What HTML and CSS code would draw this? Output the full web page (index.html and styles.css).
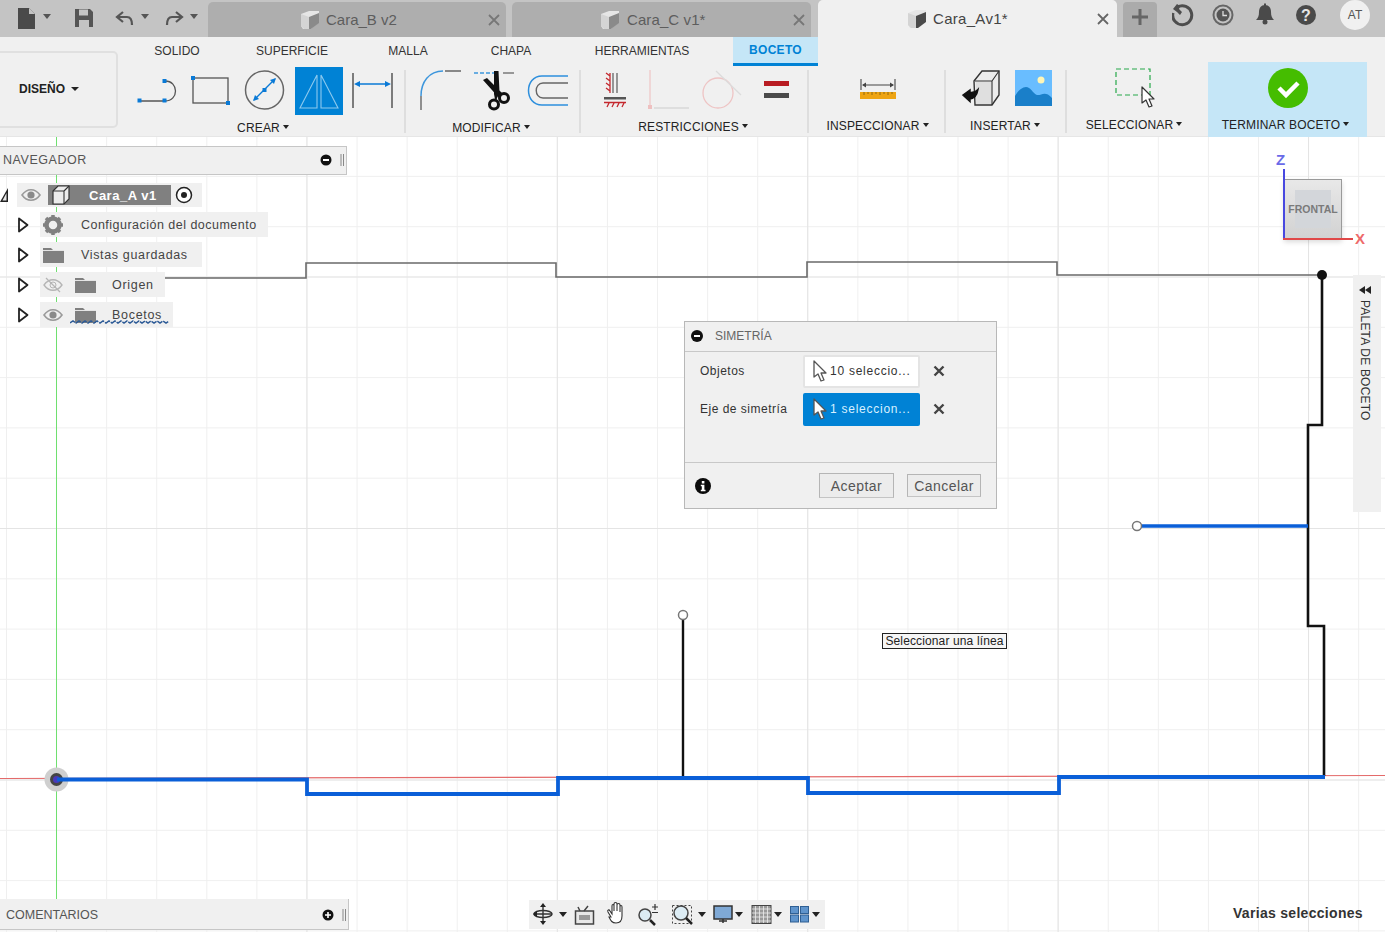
FILE: index.html
```html
<!DOCTYPE html>
<html lang="es">
<head>
<meta charset="utf-8">
<title>Cara_A v1</title>
<link rel="stylesheet" href="styles.css">
</head>
<body>
<svg class="defs" width="0" height="0">
  <defs>
    <symbol id="cube" viewBox="0 0 20 20"><path d="M1 4 9 1h10v11l-8 7H3l-2-3z" fill="#e6e6e6"/><path d="M9 7l10-4v10l-8 6H9z" fill="currentColor"/><path d="M1 4l8 3v12H4l-3-3z" fill="#d4d4d4"/></symbol>
    <symbol id="eye" viewBox="0 0 20 14"><path d="M1 7c5-7 13-7 18 0-5 7-13 7-18 0z" fill="none" stroke="#9a9a9a" stroke-width="1.600"/><circle cx="10" cy="7" r="3.600" fill="#8a8a8a"/></symbol>
    <symbol id="folder" viewBox="0 0 21 16"><path d="M0 1h8l2 2h11v13H0z" fill="#808080"/><path d="M0 3.500h21" stroke="#e5e5e5" stroke-width="1"/></symbol>
    <symbol id="expander" viewBox="0 0 12 16"><path d="M2 1.500 10.500 8 2 14.500z" fill="#fff" stroke="#222" stroke-width="1.800" stroke-linejoin="round"/></symbol>
    <symbol id="arrow" viewBox="0 0 16 22"><path d="M2 1v16l4-3 3 7 3-1-3-7h5z" fill="#fff" stroke="#555" stroke-width="1.300" stroke-linejoin="round"/></symbol>
    <symbol id="cross" viewBox="0 0 12 12"><path d="M1.500 1.500l9 9m0-9-9 9" stroke="#444" stroke-width="2.400"/></symbol>
  </defs>
</svg>

<div class="app">
  <header class="topbar">
    <svg class="qat" width="204" height="37" viewBox="0 0 204 37">
      <path d="M18 8h11l6 6v15H18z" fill="#4a4a4a"/><path d="M29 8v6h6" fill="#c4c4c4"/>
      <path d="M43 14h8l-4 5z" fill="#555"/>
      <path d="M75 9h15l3 3v15H75z" fill="#555"/><rect x="79" y="9.500" width="9" height="6" fill="#c4c4c4"/><rect x="79" y="20" width="10" height="7" fill="#c4c4c4"/>
      <path d="M123 12l-6 5 6 5M118 17h9c4 0 5 3 5 8" fill="none" stroke="#555" stroke-width="2.200"/>
      <path d="M141 14h8l-4 5z" fill="#555"/>
      <path d="M176 12l6 5-6 5M181 17h-9c-4 0-5 3-5 8" fill="none" stroke="#555" stroke-width="2.200"/>
      <path d="M190 14h8l-4 5z" fill="#555"/>
    </svg>
    <div class="tab tab-off">
      <svg class="tab-cube"><use href="#cube"/></svg>
      <span class="tab-name">Cara_B v2</span>
      <svg class="tab-x" viewBox="0 0 12 12"><path d="M1 1l10 10m0-10L1 11" stroke="#777" stroke-width="1.800"/></svg>
    </div>
    <div class="tab tab-off">
      <svg class="tab-cube"><use href="#cube"/></svg>
      <span class="tab-name">Cara_C v1*</span>
      <svg class="tab-x" viewBox="0 0 12 12"><path d="M1 1l10 10m0-10L1 11" stroke="#777" stroke-width="1.800"/></svg>
    </div>
    <div class="tab tab-on">
      <svg class="tab-cube"><use href="#cube"/></svg>
      <span class="tab-name">Cara_Av1*</span>
      <svg class="tab-x" viewBox="0 0 12 12"><path d="M1 1l10 10m0-10L1 11" stroke="#666" stroke-width="1.800"/></svg>
    </div>
    <div class="tab-add">
      <svg width="16" height="16" viewBox="0 0 16 16"><path d="M8 0v16M0 8h16" stroke="#666" stroke-width="3"/></svg>
    </div>
    <svg class="tray" width="150" height="30" viewBox="1172 0 150 30">
      <path d="M1177.500 7A9.500 9.500 0 1 1 1173 13" fill="none" stroke="#4d4d4d" stroke-width="3"/>
      <path d="M1173 9l4-5 3 2-1 3 3 3-2 3-3-3z" fill="#4d4d4d"/>
      <circle cx="1223" cy="15" r="9.500" fill="none" stroke="#666" stroke-width="2"/>
      <circle cx="1223" cy="15" r="6.500" fill="#555"/><path d="M1223 11v4.500h4" fill="none" stroke="#ddd" stroke-width="1.300"/>
      <path d="M1265 5c-4 0-6 3-6 7 0 4-1 6-3 8h18c-2-2-3-4-3-8 0-4-2-7-6-7z" fill="#4a4a4a"/><circle cx="1265" cy="22" r="2.500" fill="#4a4a4a"/><rect x="1264" y="3.500" width="2" height="3" fill="#4a4a4a"/>
      <circle cx="1306" cy="15" r="10" fill="#4a4a4a"/>
      <text x="1306" y="20.500" class="help-mark">?</text>
    </svg>
    <div class="avatar">AT</div>
  </header>

  <section class="ribbon">
    <div class="design-box"><span class="design">DISEÑO</span><i class="caret"></i></div>
    <div class="ribbon-main">
      <nav class="rib-tabs">
        <span class="rib-tab">SOLIDO</span>
        <span class="rib-tab">SUPERFICIE</span>
        <span class="rib-tab">MALLA</span>
        <span class="rib-tab">CHAPA</span>
        <span class="rib-tab">HERRAMIENTAS</span>
        <span class="rib-tab rib-tab-on">BOCETO</span>
      </nav>
      <div class="tools">
        <div class="group g-crear">
          <svg class="gicons" width="285" height="53" viewBox="120 62 285 53">
            <path d="M139 101h26c14 0 14-20 0-20" fill="none" stroke="#555" stroke-width="1.300"/>
            <g fill="#0a7ad6"><rect x="137.500" y="98.500" width="4" height="4"/><rect x="162.500" y="98.500" width="4" height="4"/><rect x="162.500" y="79" width="4" height="4"/></g>
            <rect x="193" y="78" width="35" height="25" fill="none" stroke="#555" stroke-width="1.300"/>
            <g fill="#0a7ad6"><rect x="191" y="76" width="4" height="4"/><rect x="226" y="101" width="4" height="4"/></g>
            <circle cx="264.500" cy="90" r="19" fill="none" stroke="#666" stroke-width="1.500"/>
            <path d="M254 100l21-21" stroke="#0a7ad6" stroke-width="1.300"/>
            <path d="M253 101l2-6 4 4zM276 78l-2 6-4-4z" fill="#0a7ad6"/><rect x="262.500" y="88" width="4" height="4" fill="#0a7ad6"/>
            <rect x="295" y="67" width="48" height="48" fill="#0082d5"/>
            <path d="M317 75v33h-17zM321 75v33h17z" fill="none" stroke="#8cc9ee" stroke-width="1.100"/>
            <path d="M353 73v35M392 73v35" stroke="#555" stroke-width="1.500"/>
            <path d="M356 84h33" stroke="#0a7ad6" stroke-width="1.300"/>
            <path d="M354 84l6-3v6zM391 84l-6-3v6z" fill="#0a7ad6"/>
          </svg>
          <div class="glabel">CREAR<i class="caret caret-s"></i></div>
        </div>
        <div class="group g-mod">
          <svg class="gicons" width="174" height="53" viewBox="406 62 174 53">
            <path d="M421 96c0-14 8-25 22-25" fill="none" stroke="#3d96dc" stroke-width="1.500"/>
            <path d="M421 96v14M445 71h16" stroke="#666" stroke-width="1.400"/>
            <path d="M474 73h21" stroke="#3d96dc" stroke-width="1.300" stroke-dasharray="4 2"/><path d="M503 73h11" stroke="#666" stroke-width="1.300"/>
            <path d="M483 80l4-2 15 15-2 6zM494 71h4.500l1 21-4 10-1.500-8z" fill="#111"/>
            <circle cx="504" cy="98" r="4.500" fill="#f0f0f0" stroke="#111" stroke-width="3"/>
            <circle cx="494" cy="104.500" r="4.500" fill="#f0f0f0" stroke="#111" stroke-width="3"/>
            <path d="M568 76h-26c-18 0-18 29 0 29h26" fill="none" stroke="#2d8fdd" stroke-width="1.500"/>
            <path d="M568 83h-25c-9 0-9 15 0 15h25" fill="none" stroke="#666" stroke-width="1.400"/>
          </svg>
          <div class="glabel lb-mod">MODIFICAR<i class="caret caret-s"></i></div>
        </div>
        <div class="group g-res">
          <svg class="gicons" width="227" height="53" viewBox="581 62 227 53">
            <path d="M617 73v20M613 73v20" stroke="#666" stroke-width="1.300"/>
            <path d="M610 73v20M610 76l-4-3M610 81l-4-3M610 86l-4-3M610 91l-4-3" stroke="#c4282e" stroke-width="1.300" fill="none"/>
            <rect x="604" y="97" width="22" height="2.500" fill="#555"/>
            <path d="M604 102.500h22M607 107l2-4M612 107l2-4M617 107l2-4M622 107l2-4" stroke="#c4282e" stroke-width="1.300"/>
            <path d="M650 70v36" stroke="#eec8c8" stroke-width="1.300"/><rect x="648" y="105" width="4" height="4" fill="#eec0c0"/><path d="M654 108h35" stroke="#d8d8d8" stroke-width="1.300"/>
            <circle cx="718" cy="93" r="15" fill="none" stroke="#eec4c4" stroke-width="1.300"/><path d="M716 71l25 24" stroke="#dcdcdc" stroke-width="1.300"/>
            <rect x="764" y="81" width="25" height="5" fill="#b81c22"/><rect x="764" y="93" width="25" height="5" fill="#4a4a4a"/>
          </svg>
          <div class="glabel glabel-up lb-res">RESTRICCIONES<i class="caret caret-s"></i></div>
        </div>
        <div class="group g-ins">
          <svg class="gicons" width="136" height="53" viewBox="809 62 136 53">
            <path d="M861 79v11M895 79v11" stroke="#555" stroke-width="1.200"/>
            <path d="M863 85h30" stroke="#444" stroke-width="1"/><path d="M862 85l4-2.500v5zM894 85l-4-2.500v5z" fill="#444"/>
            <rect x="860" y="92" width="36" height="7" fill="#eea413"/>
            <path d="M864 92v3M868 92v2M872 92v3M876 92v2M880 92v3M884 92v2M888 92v3M892 92v2" stroke="#7a5a10" stroke-width=".8"/>
          </svg>
          <div class="glabel glabel-up2">INSPECCIONAR<i class="caret caret-s"></i></div>
        </div>
        <div class="group g-ins2">
          <svg class="gicons" width="120" height="53" viewBox="946 62 120 53">
            <path d="M974 81l8-10h17v24l-7 10h-17z" fill="#ececec" stroke="#333" stroke-width="1.400"/>
            <path d="M975 81h17v24M992 81l7-10" fill="none" stroke="#333" stroke-width="1.100"/><rect x="976" y="82" width="15" height="22" fill="#dfdfdf"/>
            <path d="M963 95l7-5v2.500c3 0 5 .5 8-3-1 6-4 9-8 9.500v2.500z" fill="#111" stroke="#111" stroke-width="1.500"/>
            <rect x="1015" y="70" width="37" height="36" fill="#69bdff"/>
            <path d="M1015 106V96c4-7 10-11 14-8 3 2 5 6 8 7 4 1 8-5 15 3v8z" fill="#1a7fc9"/>
            <circle cx="1041" cy="80" r="3.500" fill="#fff6b8"/>
          </svg>
          <div class="glabel glabel-up2 lb-ins2">INSERTAR<i class="caret caret-s"></i></div>
        </div>
        <div class="group g-sel">
          <svg class="gicons" width="133" height="53" viewBox="1067 62 133 53">
            <rect x="1116" y="69" width="34" height="26" fill="none" stroke="#27a84a" stroke-width="1.200" stroke-dasharray="5 3"/>
            <path d="M1142 87v16l4-3 3 7 3-1-3-7h5z" fill="#fff" stroke="#333" stroke-width="1.200" stroke-linejoin="round"/>
          </svg>
          <div class="glabel glabel-up3 lb-sel">SELECCIONAR<i class="caret caret-s"></i></div>
        </div>
        <div class="group g-end">
          <svg class="gicons" width="159" height="46" viewBox="1208 62 159 46">
            <circle cx="1288" cy="88" r="20" fill="#45bd00"/>
            <path d="M1279 88l7 7 12-12" fill="none" stroke="#fff" stroke-width="4.500"/>
          </svg>
          <div class="glabel glabel-end">TERMINAR BOCETO<i class="caret caret-s"></i></div>
        </div>
      </div>
    </div>
  </section>

  <main class="canvas">
    <svg class="sketch" viewBox="0 137 1385 795" width="1385" height="795">
      <defs>
        <pattern id="minor" x="6" y="25" width="50.08" height="50.3" patternUnits="userSpaceOnUse"><path d="M0 0V50.300M0 0H50.080" stroke="#efefef" stroke-width="2" fill="none"/></pattern>
        <pattern id="major" x="56" y="25" width="250.400" height="251.500" patternUnits="userSpaceOnUse"><path d="M0 0V251.500M0 0H250.400" stroke="#e4e4e4" stroke-width="2" fill="none"/></pattern>
      </defs>
      <rect x="0" y="137" width="1385" height="795" fill="#fff"/>
      <rect x="0" y="137" width="1385" height="795" fill="url(#minor)"/>
      <rect x="0" y="137" width="1385" height="795" fill="url(#major)"/>
      <path d="M0 778.500 1385 775.500" stroke="#e46a6a" stroke-width="1.200"/>
      <path d="M56.500 137V900" stroke="#6fe06f" stroke-width="1"/>
      <path d="M163 278H306V263H556V277H807V262H1057V275H1322" fill="none" stroke="#6a6a6a" stroke-width="1.600"/>
      <path d="M1322 275V425H1308V626H1324V776" fill="none" stroke="#111" stroke-width="2.600"/>
      <path d="M683 618V777" stroke="#111" stroke-width="2.400"/>
      <path d="M1140 526H1308" stroke="#0a5fd8" stroke-width="3.500"/>
      <circle cx="1322" cy="275" r="5" fill="#111"/>
      <circle cx="683" cy="615" r="4.500" fill="#fff" stroke="#777" stroke-width="1.500"/>
      <circle cx="1137" cy="526" r="4.500" fill="#fff" stroke="#777" stroke-width="1.500"/>
      <circle cx="56.500" cy="779.500" r="12" fill="#cfcfcf"/>
      <circle cx="56.500" cy="779.500" r="6.500" fill="#444"/>
      <circle cx="56.500" cy="779.500" r="3.500" fill="#4a38b8"/>
      <path d="M57 779.500H307V794H558V778H808V793H1059V777H1325" fill="none" stroke="#0a5fd8" stroke-width="3.800"/>
    </svg>

    <section class="panel nav-panel">
      <span class="panel-title">NAVEGADOR</span>
      <svg class="panel-ctl" width="24" height="20" viewBox="0 0 24 20"><circle cx="6" cy="10" r="5.500" fill="#111"/><rect x="3" y="9" width="6" height="2" fill="#fff"/><path d="M21 4v12M23.500 4v12" stroke="#888" stroke-width="1"/></svg>
    </section>

    <div class="tree">
      <div class="root-row">
        <svg class="root-tri" width="9" height="16" viewBox="0 0 9 16"><path d="M8 1v14H0z" fill="#222"/><path d="M6.500 6v7.500H2.500z" fill="#e8e8e8"/></svg>
        <div class="row-bg root-bg">
          <svg class="eye"><use href="#eye"/></svg>
          <div class="root-name">
            <svg width="20" height="20" viewBox="0 0 20 20"><path d="M2 6l5-5h11v13l-5 5H2z" fill="#ececec" stroke="#333" stroke-width="1.200"/><path d="M2 6h11v13M13 6l5-5" fill="none" stroke="#333" stroke-width="1.100"/></svg>
            <span>Cara_A v1</span>
          </div>
          <svg class="radio" width="18" height="18" viewBox="0 0 18 18"><circle cx="9" cy="9" r="7.500" fill="#fff" stroke="#222" stroke-width="1.500"/><circle cx="9" cy="9" r="3" fill="#222"/></svg>
        </div>
      </div>
      <div class="tree-row">
        <svg class="exp"><use href="#expander"/></svg>
        <div class="row-bg">
          <svg class="ico-a" width="22" height="22" viewBox="0 0 22 22"><circle cx="11" cy="11" r="6.500" fill="none" stroke="#808080" stroke-width="4.500"/><path d="M11 1v4M11 17v4M1 11h4M17 11h4M4 4l3 3M15 15l3 3M18 4l-3 3M7 15l-3 3" stroke="#808080" stroke-width="3.500"/></svg>
          <span class="row-text r1">Configuración del documento</span>
        </div>
      </div>
      <div class="tree-row">
        <svg class="exp"><use href="#expander"/></svg>
        <div class="row-bg">
          <svg class="ico-f"><use href="#folder"/></svg>
          <span class="row-text r2">Vistas guardadas</span>
        </div>
      </div>
      <div class="tree-row">
        <svg class="exp"><use href="#expander"/></svg>
        <div class="row-bg">
          <svg class="ico-e" viewBox="0 0 20 16"><path d="M1 8c5-7 13-7 18 0-5 7-13 7-18 0z" fill="none" stroke="#b5b5b5" stroke-width="1.300"/><circle cx="10" cy="8" r="3" fill="none" stroke="#b5b5b5"/><path d="M3 1l14 14" stroke="#b5b5b5" stroke-width="1.300"/></svg>
          <svg class="ico-f2"><use href="#folder"/></svg>
          <span class="row-text r3">Origen</span>
        </div>
      </div>
      <div class="tree-row">
        <svg class="exp"><use href="#expander"/></svg>
        <div class="row-bg row-last">
          <svg class="ico-e" viewBox="0 0 20 16"><use href="#eye" width="20" height="14" y="1"/></svg>
          <svg class="ico-f2"><use href="#folder"/></svg>
          <span class="row-text r3">Bocetos</span>
          <svg class="wavy" width="104" height="6" viewBox="0 0 104 6"><path d="M0 4l3-2 3 2 3-2 3 2 3-2 3 2 3-2 3 2 3-2 3 2 3-2 3 2 3-2 3 2 3-2 3 2 3-2 3 2 3-2 3 2 3-2 3 2 3-2 3 2 3-2 3 2 3-2 3 2 3-2 3 2 3-2 3 2 3-2" fill="none" stroke="#2c5a96" stroke-width="1.500" stroke-dasharray="6 1"/></svg>
        </div>
      </div>
    </div>

    <div class="viewcube">
      <span class="axis-z">Z</span>
      <div class="cube-face"><i class="cube-inner"></i><span>FRONTAL</span></div>
      <span class="axis-x">X</span>
    </div>

    <aside class="palette">
      <svg width="12" height="8" viewBox="0 0 12 8"><path d="M6 0v8L0 4zM12 0v8L6 4z" fill="#222"/></svg>
      <span class="palette-text">PALETA DE BOCETO</span>
    </aside>

    <section class="dialog">
      <header class="dlg-head">
        <svg width="12" height="12" viewBox="0 0 12 12"><circle cx="6" cy="6" r="6" fill="#111"/><rect x="3" y="5" width="6" height="2" fill="#fff"/></svg>
        <span>SIMETRÍA</span>
      </header>
      <div class="dlg-body">
        <div class="dlg-row">
          <span class="dlg-label">Objetos</span>
          <div class="field"><svg class="fld-arrow"><use href="#arrow"/></svg><span>10 seleccio...</span></div>
          <svg class="fld-x"><use href="#cross"/></svg>
        </div>
        <div class="dlg-row">
          <span class="dlg-label">Eje de simetría</span>
          <div class="field field-on"><svg class="fld-arrow"><use href="#arrow"/></svg><span>1 seleccion...</span></div>
          <svg class="fld-x"><use href="#cross"/></svg>
        </div>
      </div>
      <footer class="dlg-foot">
        <svg class="info" width="16" height="16" viewBox="0 0 16 16"><circle cx="8" cy="8" r="8" fill="#0b0b0b"/><rect x="6.800" y="3" width="2.600" height="2.500" fill="#fff"/><path d="M5.800 6.800h3.600v5h1.100v1.400H5.800v-1.400h1V8.200h-1z" fill="#fff"/></svg>
        <button class="btn btn-ok">Aceptar</button>
        <button class="btn btn-cancel">Cancelar</button>
      </footer>
    </section>

    <div class="tooltip">Seleccionar una línea</div>

    <section class="panel com-panel">
      <span class="panel-title">COMENTARIOS</span>
      <svg class="panel-ctl" width="24" height="20" viewBox="0 0 24 20"><circle cx="6" cy="10" r="5.500" fill="#111"/><path d="M3 10h6M6 7v6" stroke="#fff" stroke-width="1.600"/><path d="M21 4v12M23.500 4v12" stroke="#888" stroke-width="1"/></svg>
    </section>

    <div class="navbar">
      <svg width="296" height="29" viewBox="529 900 296 29">
        <path d="M543 905v18M534 914h18" stroke="#333" stroke-width="1.400"/>
        <ellipse cx="543" cy="914" rx="9" ry="3.500" fill="none" stroke="#333" stroke-width="1.600"/>
        <path d="M543 903l-3 4h6zM543 925l-3-4h6zM533 914l4-3v6z" fill="#222"/>
        <path d="M559 912h8l-4 5zM698 912h8l-4 5zM735 912h8l-4 5zM774 912h8l-4 5zM812 912h8l-4 5z" fill="#222"/>
        <rect x="575.500" y="911" width="18" height="13" fill="#e8e8e8" stroke="#444" stroke-width="1.500"/>
        <rect x="579" y="915" width="11" height="5" fill="#9a9a9a"/>
        <path d="M578 907l2 4M588 906l-4 5" stroke="#444" stroke-width="1.500"/>
        <path d="M611 917l-3-5c-1-2 1-3 2-1l2 3v-8c0-2 2-2 2 0v5-7c0-2 3-2 3 0v7-6c0-2 3-2 3 0v7-5c0-2 2-2 2 0v9c0 5-2 7-6 7s-5-2-7-6z" fill="#fff" stroke="#333" stroke-width="1.100"/>
        <circle cx="645" cy="915" r="6" fill="#dcecf4" stroke="#444" stroke-width="1.500"/>
        <path d="M650 920l5 5" stroke="#222" stroke-width="2.500"/>
        <path d="M655 904v6M652 907h6M652 912.500h6" stroke="#333" stroke-width="1.200"/>
        <rect x="672.500" y="905.500" width="19" height="18" fill="none" stroke="#444" stroke-dasharray="2 2"/>
        <circle cx="681" cy="913" r="7" fill="#dcecf4" stroke="#444" stroke-width="1.500"/>
        <path d="M686 918l6 6" stroke="#222" stroke-width="2.500"/>
        <rect x="714" y="906" width="18" height="13" fill="#7fa9d6" stroke="#333" stroke-width="1.500"/>
        <path d="M719 921h8M723 919v4" stroke="#333" stroke-width="1.500"/>
        <rect x="752" y="905.500" width="19" height="18" fill="#999" stroke="#444"/>
        <path d="M755.500 906v17M759.500 906v17M763.500 906v17M767.500 906v17M752 909h19M752 913h19M752 917h19M752 921h19" stroke="#eee" stroke-width=".8"/>
        <rect x="790.500" y="906.500" width="8" height="7" fill="#5f94cc" stroke="#2f5f93"/><rect x="800.500" y="906.500" width="8" height="7" fill="#5f94cc" stroke="#2f5f93"/><rect x="790.500" y="915" width="8" height="7" fill="#5f94cc" stroke="#2f5f93"/><rect x="800.500" y="915" width="8" height="7" fill="#5f94cc" stroke="#2f5f93"/>
      </svg>
    </div>

    <div class="status">Varias selecciones</div>
  </main>
</div>
</body>
</html>
```

FILE: styles.css
```css
* { box-sizing: border-box; }

html, body {
  margin: 0;
  padding: 0;
  width: 1385px;
  height: 932px;
  overflow: hidden;
  background: #fff;
  font-family: "Liberation Sans", Arial, sans-serif;
  color: #333;
}

.defs { position: absolute; }
svg { display: block; flex: none; }

.app {
  display: flex;
  flex-direction: column;
  width: 1385px;
  height: 932px;
}

/* Top bar */
.topbar {
  display: flex;
  align-items: flex-end;
  height: 37px;
  flex: none;
  background: #c4c4c4;
}

.qat { align-self: flex-start; margin-right: 4px; }

.tab {
  display: flex;
  align-items: center;
  height: 35px;
  padding: 0 6px 0 92px;
  border-radius: 5px 5px 0 0;
  margin-right: 6px;
  width: 298px;
  background: #aeaeae;
  color: #5d5d5d;
  font-size: 15px;
}

.tab-off:nth-of-type(2) { margin-right: 7px; }
.tab-off + .tab-off { width: 299px; padding-left: 88px; letter-spacing: .1px; }

.tab-on {
  height: 37px;
  width: 299px;
  margin-right: 6px;
  padding: 0 8px 0 89px;
  background: #f0f0f0;
  color: #444;
  letter-spacing: .3px;
}

.tab-cube { width: 20px; height: 20px; color: #8a8a8a; margin-right: 6px; }
.tab-on .tab-cube { color: #4a4a4a; }
.tab-off + .tab-off .tab-cube { margin-right: 7px; }
.tab-name { flex: 1; }
.tab-x { width: 12px; height: 12px; }

.tab-add {
  display: flex;
  align-items: center;
  justify-content: center;
  width: 34px;
  height: 35px;
  padding-bottom: 5px;
  border-radius: 4px 4px 0 0;
  background: #ababab;
}

.tray { align-self: flex-start; margin-left: 15px; }

.avatar {
  align-self: flex-start;
  width: 30px;
  height: 30px;
  margin-left: 18px;
  border-radius: 50%;
  background: #f0f0f0;
  color: #555;
  font-size: 12px;
  line-height: 30px;
  text-align: center;
}

.help-mark {
  fill: #e6e6e6;
  font: bold 16px "Liberation Sans", sans-serif;
  text-anchor: middle;
}

/* Ribbon */
.ribbon {
  display: flex;
  flex: none;
  height: 100px;
  background: #f0f0f0;
  border-bottom: 1px solid #e6e6e6;
}

.design-box {
  display: flex;
  align-items: center;
  flex: none;
  width: 118px;
  height: 77px;
  margin-top: 14px;
  padding: 0 0 2px 19px;
  border: 2px solid #e0e0e0;
  border-left: 0;
  border-radius: 0 5px 5px 0;
}

.design { font-size: 12px; font-weight: bold; color: #222; }

.caret {
  display: inline-block;
  width: 0;
  height: 0;
  margin-left: 6px;
  border-left: 4px solid transparent;
  border-right: 4px solid transparent;
  border-top: 4px solid #222;
}

.caret-s {
  margin-left: 3px;
  border-left-width: 3.500px;
  border-right-width: 3.500px;
  vertical-align: 3px;
}

.ribbon-main { flex: 1; min-width: 0; }

.rib-tabs {
  display: grid;
  grid-template-columns: 114px 116px 116px 90px 172px 90px;
  height: 29px;
  margin-left: 2px;
  margin-bottom: -4px;
  font-size: 12px;
  color: #333;
}

.rib-tab {
  text-align: center;
  line-height: 29px;
}

.rib-tab-on {
  justify-self: end;
  width: 85px;
  height: 29px;
  background: #c5e6f7;
  border-bottom: 3px solid #0082d5;
  color: #0082d5;
  font-weight: bold;
  line-height: 26px;
  letter-spacing: .3px;
}

.tools {
  display: flex;
  height: 75px;
  margin-left: 2px;
}

.group {
  flex: none;
  position: relative;
  font-size: 12px;
  letter-spacing: .15px;
  color: #222;
  text-align: center;
}

.group::after {
  content: "";
  position: absolute;
  top: 8px;
  right: 0;
  width: 2px;
  height: 63px;
  background: #dedede;
}

.g-crear { width: 286px; }
.g-mod { width: 175px; }
.g-res { width: 228px; }
.g-ins { width: 137px; }
.g-ins2 { width: 121px; }
.g-sel { width: 141px; }
.g-sel::after, .g-end::after { display: none; }
.g-end { width: 159px; background: #c5e6f7; }

.gicons { margin: 0; }

.glabel { margin-top: 6px; line-height: 14px; }
.glabel-up { margin-top: 5px; }
.glabel-up2 { margin-top: 4px; }
.glabel-up3 { margin-top: 3px; }
.glabel-end { margin-top: 10px; padding-right: 4px; }
.lb-mod { padding-right: 5px; }
.lb-res { padding-right: 4px; }
.lb-ins2 { padding-right: 3px; }
.lb-sel { padding-right: 7px; }

/* Canvas */
.canvas {
  position: relative;
  flex: 1;
  overflow: hidden;
}

.sketch { position: absolute; inset: 0; }

.panel {
  position: absolute;
  left: 0;
  display: flex;
  align-items: center;
  justify-content: space-between;
  background: #f0f0f0;
  border: 1px solid #c6c6c6;
  border-left: 0;
  font-size: 12.500px;
  color: #555;
}

.nav-panel {
  top: 9px;
  width: 347px;
  height: 29px;
  padding: 0 2px 2px 3px;
  letter-spacing: .55px;
}

.com-panel {
  top: 762px;
  width: 349px;
  height: 31px;
  padding: 1px 2px 0 6px;
  border-top: 0;
}

.panel-ctl { margin-top: 1px; }

/* Tree */
.tree {
  position: absolute;
  top: 46px;
  left: 0;
  font-size: 12.500px;
  letter-spacing: .48px;
  color: #444;
}

.root-row {
  display: flex;
  align-items: center;
  height: 24px;
  margin-bottom: 5px;
}

.root-tri { margin-right: 8px; }

.row-bg {
  display: flex;
  align-items: center;
  height: 25px;
  background: #f0f0f0;
}

.root-bg { height: 24px; width: 185px; padding-left: 4px; }
.eye { width: 20px; height: 14px; margin-right: 7px; }

.root-name {
  display: flex;
  align-items: center;
  width: 123px;
  height: 20px;
  padding-left: 3px;
  background: #808080;
  color: #fff;
  font-weight: bold;
  font-size: 13px;
  letter-spacing: .5px;
}

.root-name span { margin-left: 18px; }
.radio { margin-left: 4px; }

.tree-row {
  display: flex;
  align-items: center;
  height: 25px;
  margin-bottom: 5px;
  padding-left: 17px;
}

.exp { width: 12px; height: 16px; margin-right: 11px; }
.ico-a { margin-left: 2px; }
.ico-f { width: 21px; height: 16px; margin-left: 3px; }
.ico-e { width: 20px; height: 16px; margin-left: 3px; }
.ico-f2 { width: 21px; height: 16px; margin-left: 12px; }

.row-text { white-space: nowrap; }
.r1 { margin-left: 17px; padding-right: 11px; }
.r2 { margin-left: 17px; padding-right: 14px; letter-spacing: .65px; }
.r3 { margin-left: 16px; padding-right: 11px; letter-spacing: .7px; }

.row-last { position: relative; }
.wavy { position: absolute; left: 30px; top: 17px; }

/* View cube */
.viewcube {
  position: absolute;
  top: 14px;
  left: 1274px;
  width: 96px;
  height: 96px;
}

.axis-z {
  position: absolute;
  left: 2px;
  top: 0;
  font-size: 15px;
  font-weight: bold;
  color: #6a6ae8;
}

.axis-x {
  position: absolute;
  left: 81px;
  top: 79px;
  font-size: 15px;
  font-weight: bold;
  color: #ee6a6a;
}

.cube-face {
  position: absolute;
  left: 10px;
  top: 28px;
  width: 58px;
  height: 60px;
  display: flex;
  align-items: center;
  justify-content: center;
  background: linear-gradient(#e8e8e8, #d2d2d2);
  border: 1px solid #9a9a9a;
  box-shadow: 0 3px 5px rgba(0, 0, 0, .15);
  color: #7a7a7a;
  font-size: 10.500px;
  font-weight: bold;
}

.cube-face span { position: relative; }

.cube-inner {
  position: absolute;
  left: 10px;
  top: 10px;
  width: 36px;
  height: 38px;
  background: #d3d6da;
}

.cube-face::after {
  content: "";
  position: absolute;
  left: -2px;
  bottom: -2px;
  width: 70px;
  height: 2px;
  background: #e04848;
}

.cube-face::before {
  content: "";
  position: absolute;
  left: -2px;
  bottom: -1px;
  width: 2px;
  height: 70px;
  background: #4848e0;
}

/* Palette */
.palette {
  position: absolute;
  top: 138px;
  left: 1353px;
  width: 28px;
  height: 237px;
  display: flex;
  flex-direction: column;
  align-items: center;
  padding: 11px 4px 0 0;
  background: #f0f0f0;
  color: #333;
  font-size: 12px;
}

.palette-text {
  writing-mode: vertical-rl;
  margin-top: 6px;
  white-space: nowrap;
  letter-spacing: .2px;
}

/* Dialog */
.dialog {
  position: absolute;
  top: 184px;
  left: 684px;
  width: 313px;
  height: 188px;
  display: flex;
  flex-direction: column;
  background: #f0f0f0;
  border: 1px solid #b8b8b8;
  font-size: 12px;
  color: #333;
}

.dlg-head {
  display: flex;
  align-items: center;
  flex: none;
  gap: 12px;
  height: 30px;
  padding: 0 0 1px 6px;
  border-bottom: 1px solid #c8c8c8;
  color: #666;
}

.dlg-body {
  flex: 1;
  padding-top: 2px;
}

.dlg-row {
  display: flex;
  align-items: center;
  height: 34px;
  margin-bottom: 4px;
}

.dlg-label { width: 118px; padding-left: 15px; flex: none; letter-spacing: .5px; }

.field {
  display: flex;
  align-items: center;
  flex: none;
  width: 117px;
  height: 33px;
  padding-left: 7px;
  background: #fff;
  border: 2px solid #e4e4e4;
  border-radius: 2px;
  letter-spacing: .75px;
  white-space: nowrap;
}

.field-on {
  background: #0082d5;
  border-color: #0082d5;
  color: #d8f0ff;
}

.fld-arrow { width: 16px; height: 22px; margin-right: 2px; }
.fld-x { width: 12px; height: 12px; margin-left: 13px; }

.dlg-foot {
  display: flex;
  align-items: center;
  flex: none;
  height: 46px;
  padding-left: 10px;
  border-top: 1px solid #c8c8c8;
}

.info { margin-right: 108px; }

.btn {
  height: 25px;
  padding: 0;
  background: #ececec;
  border: 1px solid #b5b5b5;
  border-bottom-color: #c4c4c4;
  color: #555;
  font: 14px "Liberation Sans", sans-serif;
  letter-spacing: .45px;
}

.btn-ok { width: 75px; margin-right: 13px; }
.btn-cancel { width: 74px; height: 23px; }

.tooltip {
  position: absolute;
  top: 496px;
  left: 882px;
  width: 125px;
  height: 16px;
  background: #f6f6f6;
  border: 1px solid #222;
  color: #222;
  font-size: 12px;
  line-height: 14px;
  letter-spacing: .13px;
  text-align: center;
  white-space: nowrap;
}

.navbar {
  position: absolute;
  top: 763px;
  left: 529px;
  background: #f0f0f0;
}

.status {
  position: absolute;
  top: 768px;
  left: 1233px;
  color: #333;
  font-size: 14px;
  font-weight: bold;
  letter-spacing: .3px;
  white-space: nowrap;
}
```
